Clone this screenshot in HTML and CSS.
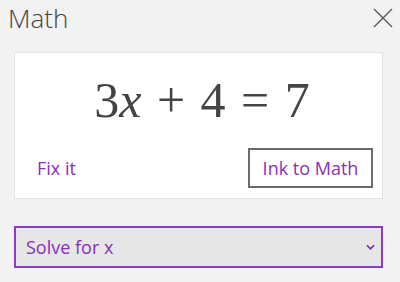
FILE: index.html
```html
<!DOCTYPE html>
<html lang="en">
<head>
  <meta charset="UTF-8" />
  <title>Math</title>
  <link rel="stylesheet" href="styles.css">
</head>
<body>
  <div class="pane">
    <div class="pane-header">
      <h1 class="pane-title">Math</h1>
      <button class="close-btn" aria-label="Close">
        <svg viewBox="0 0 20 20" width="20" height="20">
          <path d="M1 1L19 19M19 1L1 19" stroke="#555" stroke-width="1.3" fill="none"/>
        </svg>
      </button>
    </div>

    <div class="card">
      <div class="equation">3<i>x</i> + 4 = 7</div>
      <div class="card-actions">
        <a class="link" href="#">Fix it</a>
        <button class="ink-btn">Ink to Math</button>
      </div>
    </div>

    <div class="dropdown">
      <span>Solve for x</span>
      <svg viewBox="0 0 10 6" width="9" height="6">
        <path d="M1 1L5 5L9 1" stroke="#7a28b0" stroke-width="1.8" fill="none"/>
      </svg>
    </div>
  </div>
</body>
</html>
```

FILE: styles.css
```css
* {
  margin: 0;
  padding: 0;
  box-sizing: border-box;
}

html, body {
  height: 100%;
  background-color: #f2f2f2;
  font-family: 'Open Sans', 'Noto Sans', sans-serif;
}

.pane {
  padding: 0 17px 0 14px;
}

.pane-header {
  display: flex;
  justify-content: space-between;
  align-items: center;
  height: 52px;
  margin-left: -6px;
  margin-right: -10px;
  padding-bottom: 16px;
}

.pane-title {
  font-size: 26px;
  font-weight: 300;
  color: #444;
}

.close-btn {
  border: none;
  background: none;
  display: flex;
}

.card {
  background-color: white;
  border: 1px solid #e3e3e3;
  height: 147px;
  display: flex;
  flex-direction: column;
  padding: 0 9px 10px 22px;
}

.equation {
  font-family: 'Liberation Serif', serif;
  font-size: 50px;
  color: #444;
  text-align: center;
  word-spacing: 3px;
  padding-top: 18px;
  padding-right: 6px;
  height: 95px;
}

.equation i {
  font-style: italic;
}

.card-actions {
  display: flex;
  justify-content: space-between;
  align-items: center;
}

.link {
  color: #8a2fb8;
  text-decoration: none;
  font-size: 18px;
}

.ink-btn {
  background: white;
  border: 2px solid #6b6b6b;
  color: #8a2fb8;
  font-family: inherit;
  font-size: 18px;
  width: 125px;
  height: 40px;
}

.dropdown {
  margin-top: 27px;
  height: 42px;
  border: 2px solid #8c3cc4;
  background-color: #e6e6e6;
  color: #8a2fb8;
  font-size: 18px;
  display: flex;
  justify-content: space-between;
  align-items: center;
  padding: 0 6px 0 10px;
}
```
